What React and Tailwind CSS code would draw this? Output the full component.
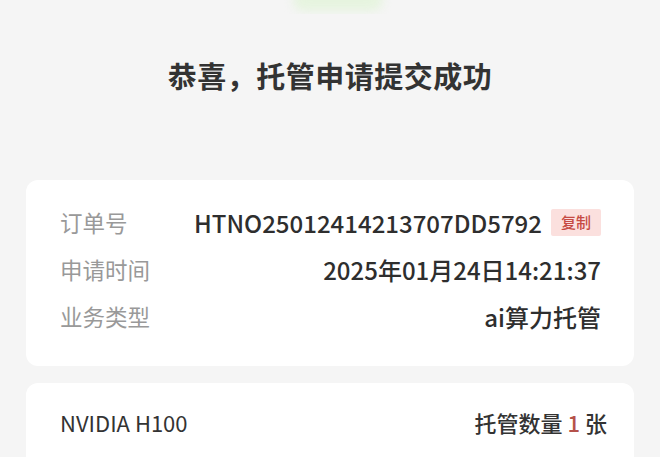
export default function App() {
  const font = { fontFamily: '"Noto Sans CJK SC", "Noto Sans", sans-serif' };
  return (
    <div className="w-[660px] h-[457px] bg-[#f5f5f5] overflow-hidden text-[#333]" style={font}>
      <div className="h-[14px] flex justify-center overflow-hidden">
        <div className="w-[90px] h-[22px] -mt-[11px] ml-[16px] rounded-full bg-[#e6f4df] blur-[5px]" />
      </div>
      <h1 className="mt-[41px] text-center text-[29px] leading-[40px] font-semibold text-[#333] tracking-[0.5px]">
        恭喜，托管申请提交成功
      </h1>
      <div className="mt-[85px] mx-[26px] bg-white rounded-[12px] pt-[19px] pb-[26px] pl-[34px] pr-[33px]">
        <div className="h-[47px] flex items-center justify-between">
          <span className="text-[22.5px] text-[#999]">订单号</span>
          <div className="flex items-center gap-[9px]">
            <span className="text-[24px] font-medium text-[#2e2e2e]">HTNO25012414213707DD5792</span>
            <span className="h-[27px] px-[10px] flex items-center bg-[#fbe0de] text-[#c64a43] text-[15px] font-medium rounded-[2px]">复制</span>
          </div>
        </div>
        <div className="h-[47px] flex items-center justify-between">
          <span className="text-[22.5px] text-[#999]">申请时间</span>
          <span className="text-[24px] font-medium text-[#2e2e2e]">2025年01月24日14:21:37</span>
        </div>
        <div className="h-[47px] flex items-center justify-between">
          <span className="text-[22.5px] text-[#999]">业务类型</span>
          <span className="text-[24px] font-medium text-[#2e2e2e]">ai算力托管</span>
        </div>
      </div>
      <div className="mt-[17px] mx-[26px] bg-white rounded-[12px] pt-[16px] pb-[24px] pl-[34px] pr-[27px]">
        <div className="h-[47px] flex items-center justify-between">
          <span className="text-[22px] text-[#333]">NVIDIA H100</span>
          <span className="text-[22px] font-medium text-[#333]">
            托管数量 <span className="text-[#b5524a]">1</span> 张
          </span>
        </div>
      </div>
    </div>
  );
}
